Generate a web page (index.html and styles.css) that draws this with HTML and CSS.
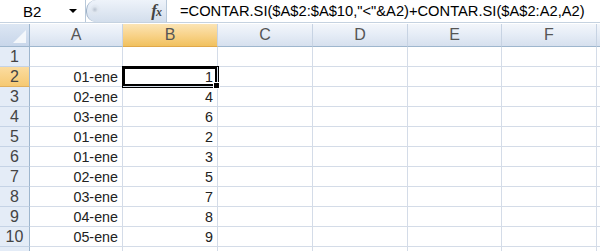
FILE: index.html
```html
<!DOCTYPE html>
<html>
<head>
<meta charset="utf-8">
<link rel="stylesheet" href="styles.css">
</head>
<body>
<div class="app">
  <div class="fbar">
    <div class="namebox"><span class="ref">B2</span><span class="arrow"></span></div>
    <div class="pill"><span class="knob"></span><span class="fx"><i>f</i><i class="x">x</i></span></div>
    <div class="formula">=CONTAR.SI($A$2:$A$10,"&lt;"&amp;A2)+CONTAR.SI($A$2:A2,A2)</div>
  </div>
  <div class="sheet">
    <div class="corner"><span class="tri"></span></div>
    <div class="ch">A</div><div class="ch sel">B</div><div class="ch">C</div><div class="ch">D</div><div class="ch">E</div><div class="ch">F</div><div class="ch end"></div>

    <div class="rh">1</div><div class="c"></div><div class="c"></div><div class="c"></div><div class="c"></div><div class="c"></div><div class="c"></div><div class="c"></div>
    <div class="rh sel">2</div><div class="c">01-ene</div><div class="c active">1<span class="handle"></span></div><div class="c"></div><div class="c"></div><div class="c"></div><div class="c"></div><div class="c"></div>
    <div class="rh">3</div><div class="c">02-ene</div><div class="c">4</div><div class="c"></div><div class="c"></div><div class="c"></div><div class="c"></div><div class="c"></div>
    <div class="rh">4</div><div class="c">03-ene</div><div class="c">6</div><div class="c"></div><div class="c"></div><div class="c"></div><div class="c"></div><div class="c"></div>
    <div class="rh">5</div><div class="c">01-ene</div><div class="c">2</div><div class="c"></div><div class="c"></div><div class="c"></div><div class="c"></div><div class="c"></div>
    <div class="rh">6</div><div class="c">01-ene</div><div class="c">3</div><div class="c"></div><div class="c"></div><div class="c"></div><div class="c"></div><div class="c"></div>
    <div class="rh">7</div><div class="c">02-ene</div><div class="c">5</div><div class="c"></div><div class="c"></div><div class="c"></div><div class="c"></div><div class="c"></div>
    <div class="rh">8</div><div class="c">03-ene</div><div class="c">7</div><div class="c"></div><div class="c"></div><div class="c"></div><div class="c"></div><div class="c"></div>
    <div class="rh">9</div><div class="c">04-ene</div><div class="c">8</div><div class="c"></div><div class="c"></div><div class="c"></div><div class="c"></div><div class="c"></div>
    <div class="rh">10</div><div class="c">05-ene</div><div class="c">9</div><div class="c"></div><div class="c"></div><div class="c"></div><div class="c"></div><div class="c"></div>
    <div class="rh"></div><div class="c"></div><div class="c"></div><div class="c"></div><div class="c"></div><div class="c"></div><div class="c"></div><div class="c"></div>
  </div>
</div>
</body>
</html>
```

FILE: styles.css
```css
html, body {
  margin: 0;
  padding: 0;
  background: #ffffff;
  overflow: hidden;
}
.app {
  width: 600px;
  height: 251px;
  overflow: hidden;
  font-family: "Liberation Sans", Arial, sans-serif;
  color: #000;
}
.fbar {
  display: flex;
  height: 22px;
  border-bottom: 1px solid #c5d2e0;
  background: #fff;
}
.namebox {
  width: 85px;
  display: flex;
  align-items: center;
  position: relative;
  font-size: 15px;
  border-right: 1px solid #b9c9da;
}
.namebox .ref {
  margin-left: 23px;
  flex: 1;
}
.namebox .arrow {
  width: 0;
  height: 0;
  border-left: 4px solid transparent;
  border-right: 4px solid transparent;
  border-top: 4px solid #000;
  margin-right: 8px;
}
.pill {
  width: 80px;
  background: linear-gradient(#eef3fa, #d3deec);
  border-radius: 10px 0 0 10px;
  border-left: 1px solid #9fb2c8;
  display: flex;
  align-items: center;
  justify-content: space-between;
  padding: 0 5px 0 3px;
  box-sizing: border-box;
}
.knob {
  width: 12px;
  height: 14px;
  border-radius: 50%;
  background: radial-gradient(circle at 40% 40%, #b8c2cf 0, #dfe6ef 3px, transparent 6px);
}
.fx {
  font-family: "Liberation Serif", serif;
  font-size: 17px;
  font-weight: bold;
  color: #444;
  letter-spacing: -1px;
}
.fx .x { font-size: 12px; }
.formula {
  flex: 1;
  font-size: 14.7px;
  display: flex;
  align-items: center;
  padding-left: 13px;
  border-left: 1px solid #b9c9da;
  white-space: nowrap;
}
.sheet {
  margin-top: 1px;
  display: grid;
  grid-template-columns: 30px 93px 95px 95px 95px 94px 95px 3px;
  grid-template-rows: 23px repeat(11, 20px);
  font-size: 14.3px;
}
.corner {
  background: linear-gradient(#dce6f3, #c8d6ea);
  border-right: 1px solid #9eb6ce;
  border-bottom: 1px solid #9eb6ce;
  position: relative;
}
.tri {
  position: absolute;
  right: 3px;
  bottom: 3px;
  width: 0;
  height: 0;
  border-left: 13px solid transparent;
  border-bottom: 13px solid #f4f7fb;
}
.ch {
  background: linear-gradient(#f3f6fb 0%, #e5ecf6 50%, #d6e0ee 100%);
  border-right: 1px solid #c7d3e3;
  border-bottom: 1px solid #9eb6ce;
  display: flex;
  align-items: center;
  justify-content: center;
  color: #555;
  font-size: 16px;
}
.ch.sel {
  background: linear-gradient(#fbe4b5 0%, #f8d38a 50%, #f1c15f 100%);
  border-bottom-color: #e0a84a;
}
.ch.end { border-right: none; }
.rh {
  background: #e4ecf7;
  border-right: 1px solid #9eb6ce;
  border-bottom: 1px solid #c5d3e6;
  display: flex;
  align-items: center;
  justify-content: center;
  color: #444;
  font-size: 16px;
}
.rh.sel {
  background: linear-gradient(#fbdca0, #f6c972);
  border-bottom-color: #e0b060;
}
.c {
  border-right: 1px solid #d4dce8;
  border-bottom: 1px solid #d4dce8;
  display: flex;
  align-items: center;
  justify-content: flex-end;
  padding-right: 4px;
  color: #222;
  position: relative;
}
.c.active {
  box-shadow: inset 0 0 0 2px #000;
  outline: 1px solid #000;
  outline-offset: 0;
  z-index: 1;
}
.handle {
  position: absolute;
  right: -3px;
  bottom: -3px;
  width: 5px;
  height: 5px;
  background: #000;
  border: 1px solid #fff;
  box-sizing: content-box;
}
```
